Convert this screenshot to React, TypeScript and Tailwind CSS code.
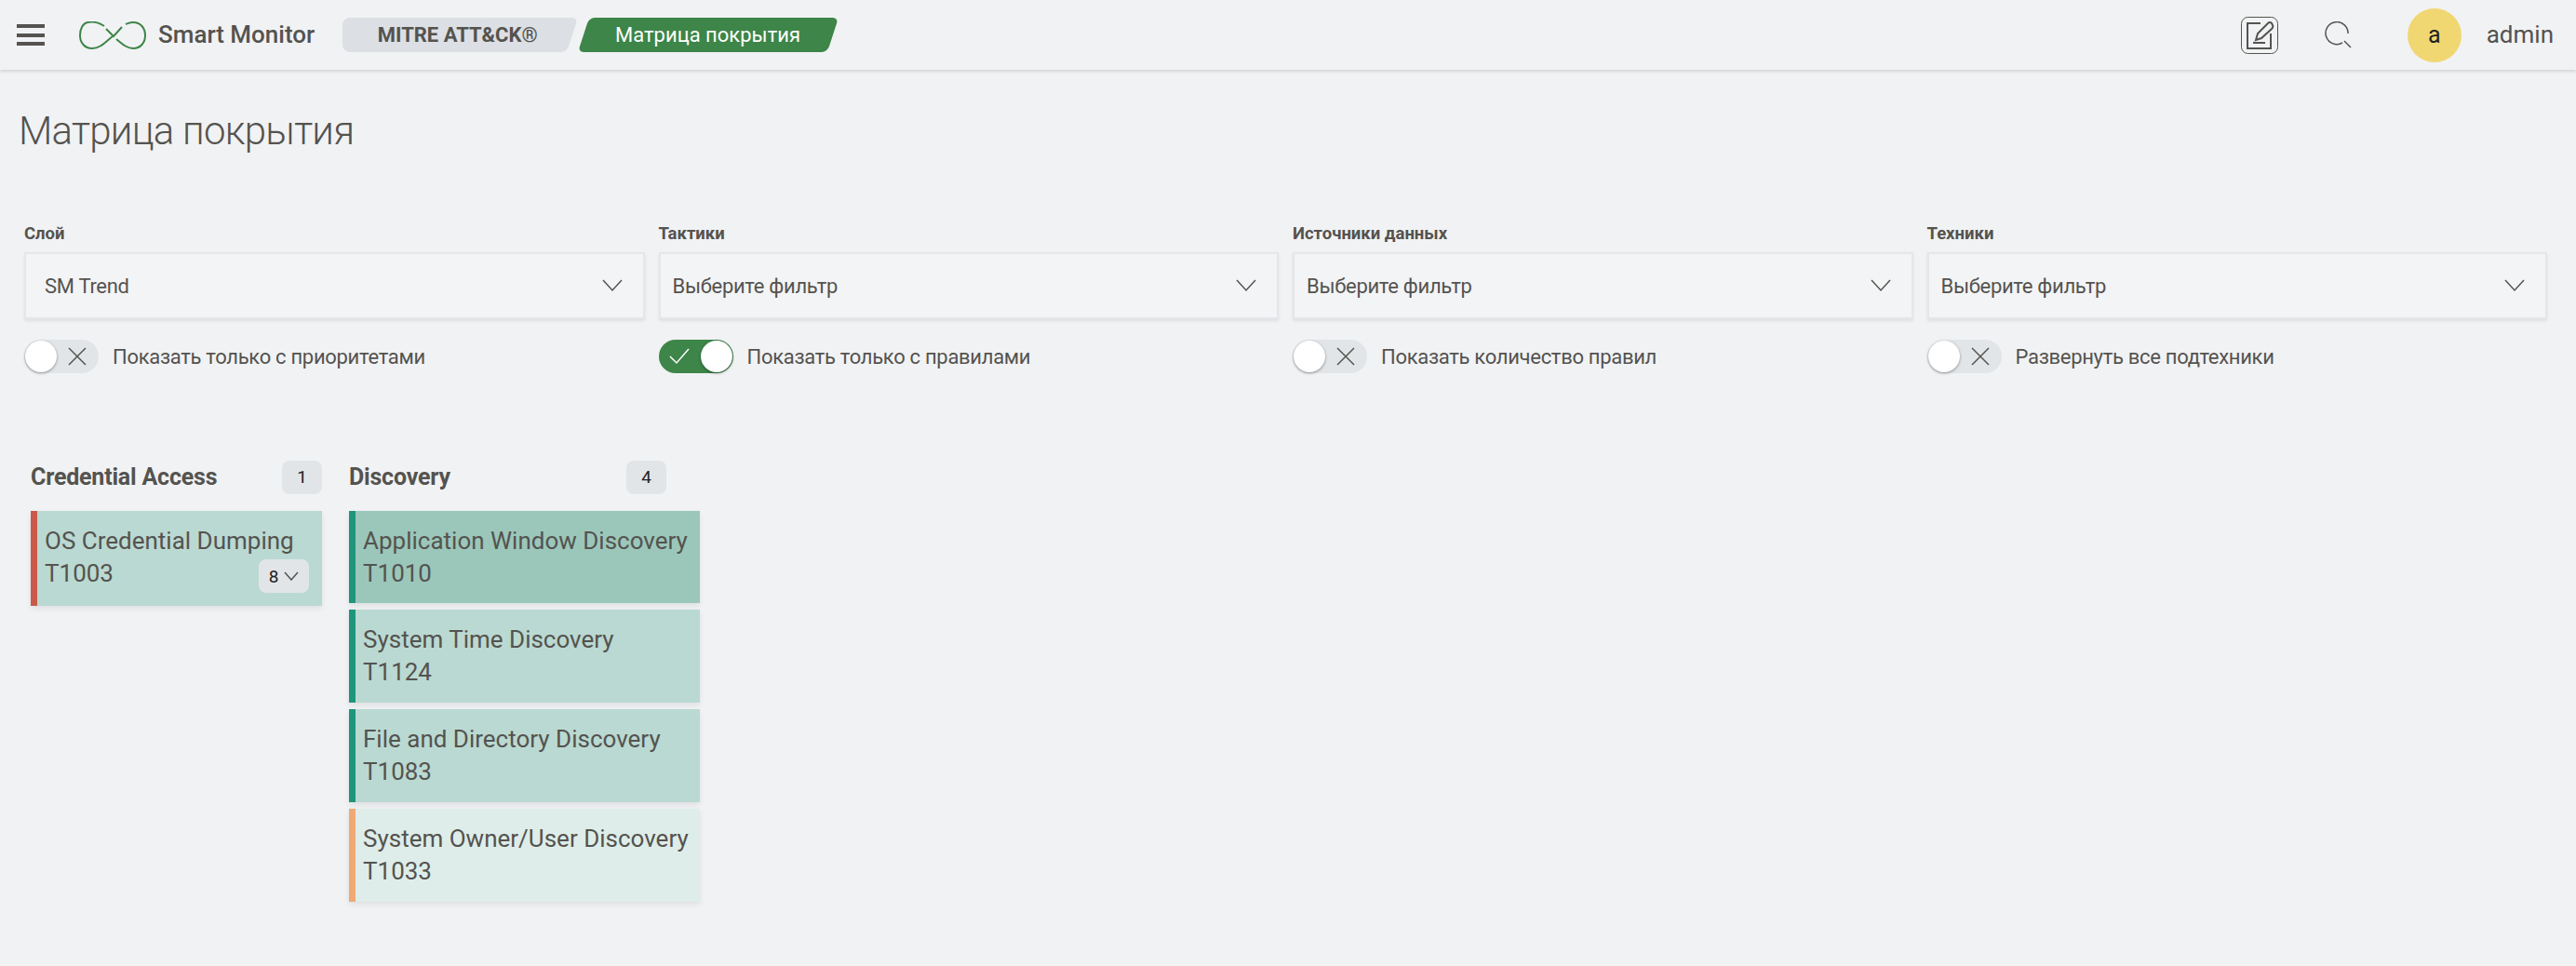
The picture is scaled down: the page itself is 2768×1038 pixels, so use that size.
const font = "font-['Roboto','Liberation_Sans',sans-serif]";

function Logo() {
  return (
    <svg width="72" height="30" viewBox="0 0 72 30" fill="none" stroke="#3d8548" strokeWidth="2">
      <path d="M27 5C21 1 14 0 9 1C4 2 1 8 1 15C1 23 6 29 14 29C23 29 28 22 36 16" />
      <path d="M40 19C47 25 52 29 58 29C66 29 71 23 71 15C71 7 66 1 58 1C55 1 53 2 50 3" />
      <path d="M29 8L37 16L46 6" />
    </svg>
  );
}

function Filter({ label, value, toggle, on, inset }: { label: string; value: string; toggle: string; on?: boolean; inset: string }) {
  return (
    <div className="flex flex-col">
      <div className="h-[28px] text-[18.5px] leading-[16px] font-bold text-[#54534f]">{label}</div>
      <div className={`flex h-[72px] items-center justify-between border-2 border-[#e4e6ea] bg-[#f3f4f6] pr-[22px] text-[22px] tracking-[-0.3px] text-[#54534f] shadow-[0_2px_3px_rgba(0,0,0,0.08)] ${inset}`}>
        <span>{value}</span>
        <svg width="22" height="14" viewBox="0 0 22 14" fill="none" stroke="#54534f" strokeWidth="1.5">
          <path d="M1 1L11 12L21 1" />
        </svg>
      </div>
      <div className="mt-[22px] flex items-center gap-[15px]">
        {on ? (
          <div className="flex h-[36px] w-[80px] items-center justify-between rounded-full bg-[#3d8548] pl-[11px] pr-px">
            <svg width="22" height="18" viewBox="0 0 22 18" fill="none" stroke="#ffffff" strokeWidth="1.5">
              <path d="M1 9L8 16L21 1" />
            </svg>
            <div className="h-[34px] w-[34px] rounded-full bg-white shadow-[0_1px_3px_rgba(0,0,0,0.4)]" />
          </div>
        ) : (
          <div className="flex h-[36px] w-[80px] items-center justify-between rounded-full bg-[#e2e5e8] pl-px pr-[13px]">
            <div className="h-[34px] w-[34px] rounded-full bg-white shadow-[0_1px_3px_rgba(0,0,0,0.4)]" />
            <svg width="20" height="20" viewBox="0 0 20 20" fill="none" stroke="#54534f" strokeWidth="1.5">
              <path d="M1 1L19 19M19 1L1 19" />
            </svg>
          </div>
        )}
        <span className="text-[22px] tracking-[-0.3px] text-[#54534f]">{toggle}</span>
      </div>
    </div>
  );
}

function Card({ name, id, bg, bar, h, children }: { name: string; id: string; bg: string; bar: string; h: string; children?: React.ReactNode }) {
  return (
    <div className={`relative border-l-[7px] pl-[8px] pt-[15px] text-[26px] leading-[35px] text-[#54534f] shadow-[0_3px_6px_rgba(0,0,0,0.08)] ${bg} ${bar} ${h}`}>
      <div className="whitespace-nowrap">{name}</div>
      <div>{id}</div>
      {children}
    </div>
  );
}

function ColumnHead({ title, count }: { title: string; count: number }) {
  return (
    <div className="flex h-[36px] items-center justify-between">
      <span className="text-[25px] font-bold tracking-[-0.2px] text-[#54534f]">{title}</span>
      <span className="flex h-[36px] w-[43px] items-center justify-center rounded-lg bg-[#e2e5e8] text-[19px] text-[#222]">{count}</span>
    </div>
  );
}

export default function App() {
  return (
    <div className={`min-h-[1038px] bg-[#f1f2f4] ${font}`}>
      {/* Top bar */}
      <header className="flex h-[75px] items-center justify-between pl-[18px] shadow-[0_2px_3px_rgba(0,0,0,0.12)]">
        <div className="flex items-center">
          <div className="flex h-[23px] w-[30px] flex-col justify-between">
            <div className="h-[4px] bg-[#54534f]" />
            <div className="h-[4px] bg-[#54534f]" />
            <div className="h-[4px] bg-[#54534f]" />
          </div>
          <div className="ml-[37px] flex">
            <Logo />
          </div>
          <span className="ml-[13px] text-[26px] font-medium whitespace-nowrap text-[#54534f]">Smart Monitor</span>
          <div className="relative ml-[30px] flex h-[37px] w-[253px] items-center justify-center pr-[6px] text-[22px] font-bold text-[#54534f]">
            <div className="absolute inset-y-0 left-0 w-[200px] rounded-l-lg bg-[#dcdfe4]" />
            <div className="absolute inset-y-0 right-[6px] w-[100px] -skew-x-[18deg] rounded-r-md bg-[#dcdfe4]" />
            <span className="relative">MITRE ATT&CK®</span>
          </div>
          <div className="ml-[6px] flex h-[37px] w-[268px] -skew-x-[18deg] items-center justify-center rounded-md bg-[#3d8548]">
            <span className="skew-x-[18deg] text-[22px] whitespace-nowrap text-white">Матрица покрытия</span>
          </div>
        </div>
        <div className="flex items-center pr-[24px]">
          <svg width="40" height="40" viewBox="0 0 40 40" fill="none" stroke="#54534f" strokeWidth="2">
            <rect x="0.5" y="0.5" width="39" height="39" rx="7" strokeWidth="1" />
            <path d="M21 7H7V34H32V18" />
            <path d="M13 28H26" />
            <path d="M16 25L18 18L29 7Q31 5 33 7L34 9Q35 11 33 13L22 23Z" />
          </svg>
          <svg className="ml-[50px]" width="30" height="30" viewBox="0 0 30 30" fill="none" stroke="#54534f" strokeWidth="1.5">
            <path d="M19 23A12 12 0 1 1 25 13" />
            <path d="M21 21L28 28" />
          </svg>
          <div className="ml-[59px] flex h-[58px] w-[58px] items-center justify-center rounded-full bg-[#f1d772] text-[25px] text-[#222]">a</div>
          <span className="ml-[27px] text-[26px] text-[#54534f]">admin</span>
        </div>
      </header>

      <h1 className="pt-[41px] pl-[20px] text-[42px] leading-[50px] font-light tracking-[-0.75px] text-[#54534f]">Матрица покрытия</h1>

      {/* Filters */}
      <div className="mt-[77px] grid grid-cols-4 gap-x-[15px] pl-[26px] pr-[31px]">
        <Filter label="Слой" value="SM Trend" toggle="Показать только с приоритетами" inset="pl-[20px]" />
        <Filter label="Тактики" value="Выберите фильтр" toggle="Показать только с правилами" on inset="pl-[13px]" />
        <Filter label="Источники данных" value="Выберите фильтр" toggle="Показать количество правил" inset="pl-[13px]" />
        <Filter label="Техники" value="Выберите фильтр" toggle="Развернуть все подтехники" inset="pl-[13px]" />
      </div>

      {/* Matrix columns */}
      <div className="mt-[94px] flex items-start gap-[29px] pl-[33px]">
        <div className="flex w-[313px] flex-col gap-[18px]">
          <ColumnHead title="Credential Access" count={1} />
          <Card name="OS Credential Dumping" id="T1003" bg="bg-[#bad9d2]" bar="border-[#c95a4a]" h="h-[102px]">
            <div className="absolute right-[14px] bottom-[14px] flex h-[36px] w-[54px] items-center justify-center gap-[6px] rounded-lg bg-[#e2e5e8] text-[19px] text-[#222]">
              8
              <svg width="16" height="10" viewBox="0 0 16 10" fill="none" stroke="#54534f" strokeWidth="1.5">
                <path d="M1 1L8 9L15 1" />
              </svg>
            </div>
          </Card>
        </div>
        <div className="flex w-[377px] flex-col">
          <div className="w-[341px]">
            <ColumnHead title="Discovery" count={4} />
          </div>
          <div className="mt-[18px] flex flex-col gap-[7px]">
            <Card name="Application Window Discovery" id="T1010" bg="bg-[#9bc7bb]" bar="border-[#1f957c]" h="h-[99px]" />
            <Card name="System Time Discovery" id="T1124" bg="bg-[#bad9d2]" bar="border-[#1f957c]" h="h-[100px]" />
            <Card name="File and Directory Discovery" id="T1083" bg="bg-[#bad9d2]" bar="border-[#1f957c]" h="h-[100px]" />
            <Card name="System Owner/User Discovery" id="T1033" bg="bg-[#deede9]" bar="border-[#efa975]" h="h-[100px]" />
          </div>
        </div>
      </div>
    </div>
  );
}
